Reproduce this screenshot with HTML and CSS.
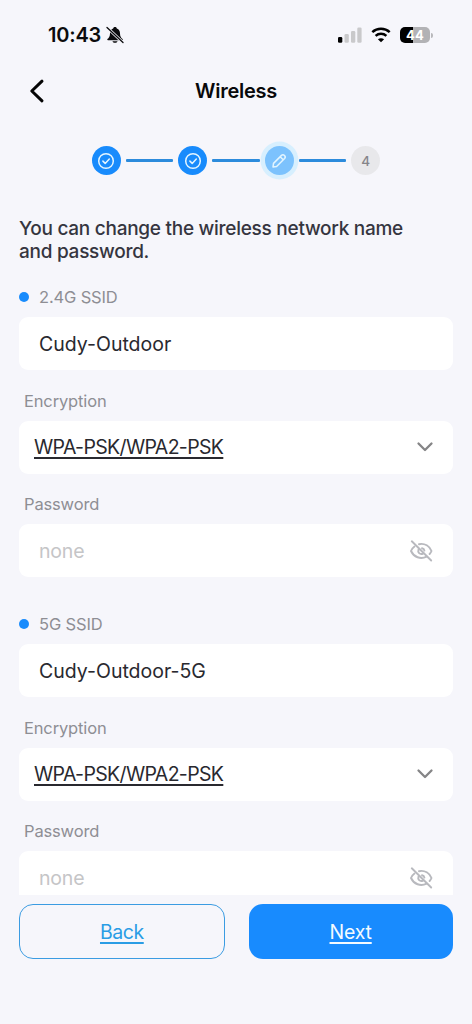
FILE: index.html
```html
<!DOCTYPE html>
<html lang="en">
<head>
<meta charset="utf-8">
<title>Wireless</title>
<link rel="stylesheet" href="styles.css">
</head>
<body>
<svg class="defs" width="0" height="0" aria-hidden="true">
  <symbol id="check" viewBox="0 0 18 18"><circle cx="9" cy="9" r="7.3"/><path d="M5.9 9.1 8.2 11.4 12.3 7"/></symbol>
  <symbol id="chevron" viewBox="0 0 18 12"><path d="M2.500 2.500 9 9 15.500 2.500"/></symbol>
  <symbol id="eye-off" viewBox="0 0 24 24">
    <path d="M10 5.200C16 4 20.500 7.300 22.500 12 22 13.200 21.400 14.100 20.600 15M17.600 17.600C11.500 20.800 4.800 18 2 12 2.800 10 4 8.600 5.500 7.500"/>
    <path d="M9.500 10.500C8.400 13.600 10.800 15.800 13.800 14.800M13 9.200C14.300 9.500 15.200 10.300 15.400 11.600M2.800 2.300 22.200 21.500"/>
  </symbol>
</svg>
<div class="screen">
  <div class="status">
    <span class="time">10:43</span>
    <svg class="bell" viewBox="0 0 18 18"><path d="M9 1C8 1 7.300 1.500 7.200 2.500 4.900 3.300 4 5.200 4 7.500 4 10.800 2.800 11.800 1.400 13.100 1 13.900 1.300 14.300 2 14.300H16C16.700 14.300 17 13.900 16.600 13.100 15.200 11.800 14 10.800 14 7.500 14 5.200 13.100 3.300 10.800 2.500 10.700 1.500 10 1 9 1ZM6.500 15.200C7 17.300 11 17.300 11.500 15.200Z"/><path class="bell-gap" d="M1 1.500 17 16.500"/><path class="bell-slash" d="M1 1.500 17 16.500"/></svg>
    <div class="indicators">
      <svg class="signal" viewBox="0 0 24 16"><rect x="0" y="10" width="4.300" height="5.800" rx="1.300" fill="#000"/><g fill="#c9c9cb"><rect x="6.500" y="7" width="4.300" height="8.800" rx="1.300"/><rect x="13" y="4" width="4.300" height="11.800" rx="1.300"/><rect x="19.300" y="0.500" width="4.300" height="15.300" rx="1.300"/></g></svg>
      <svg class="wifi" viewBox="0 0 20 16"><path d="M1.300 5.200C6.200.7 13.800.7 18.700 5.200M4.600 8.900C7.700 6.100 12.300 6.100 15.400 8.900"/><path class="dot" d="M10 15.200 6.900 12.200C8.700 10.800 11.300 10.800 13.100 12.200Z"/></svg>
      <div class="battery"><span>44</span></div><i class="battery-cap"></i>
    </div>
  </div>

  <header class="header">
    <svg class="back-icon" viewBox="0 0 16 24"><path d="M13 2.200 2.800 12 13 21.800"/></svg>
    <h1>Wireless</h1>
  </header>

  <div class="steps">
    <div class="step done"><svg><use href="#check"/></svg></div>
    <div class="line"></div>
    <div class="step done"><svg><use href="#check"/></svg></div>
    <div class="line"></div>
    <div class="step current"><svg viewBox="0 0 18 18"><path d="M3 15 3.500 11.400 11.500 3.400Q13 2 14.500 3.500 16 5 14.600 6.500L6.600 14.500ZM10.200 4.800 13.200 7.800"/></svg></div>
    <div class="line"></div>
    <div class="step todo">4</div>
  </div>

  <main class="content">
    <p class="intro">You can change the wireless network name<br><span>and password.</span></p>
    <section class="network">
      <div class="label band"><i></i><span>2.4G SSID</span></div>
      <div class="field"><span>Cudy-Outdoor</span></div>
      <div class="label"><span>Encryption</span></div>
      <div class="field select"><u>WPA-PSK/WPA2-PSK</u><svg class="chevron"><use href="#chevron"/></svg></div>
      <div class="label"><span>Password</span></div>
      <div class="field"><span class="placeholder">none</span><svg class="eye"><use href="#eye-off"/></svg></div>
    </section>
    <section class="network">
      <div class="label band"><i></i><span>5G SSID</span></div>
      <div class="field"><span>Cudy-Outdoor-5G</span></div>
      <div class="label"><span>Encryption</span></div>
      <div class="field select"><u>WPA-PSK/WPA2-PSK</u><svg class="chevron"><use href="#chevron"/></svg></div>
      <div class="label"><span>Password</span></div>
      <div class="field"><span class="placeholder">none</span><svg class="eye"><use href="#eye-off"/></svg></div>
    </section>
  </main>

  <footer class="actions">
    <div class="button secondary"><u>Back</u></div>
    <div class="button primary"><u>Next</u></div>
  </footer>
</div>
</body>
</html>
```

FILE: styles.css
```css
* { box-sizing: border-box; }
body { margin: 0; background: #f6f6fb; font-family: Inter, "Liberation Sans", sans-serif; }
svg { display: block; fill: none; flex: none; }
.defs { position: absolute; }
.screen { width: 472px; height: 1024px; display: flex; flex-direction: column; overflow: hidden; }

.status { height: 70px; flex: none; display: flex; align-items: center; padding: 0 39px 0 48px; color: #0b0b0d; }
.time { font-size: 20px; font-weight: 600; letter-spacing: -0.2px; width: 58px; }
.bell { width: 18px; height: 18px; }
.bell path { fill: #0b0b0d; }
.bell .bell-gap { stroke: #f6f6fb; stroke-width: 3; }
.bell .bell-slash { stroke: #0b0b0d; stroke-width: 1.3; stroke-linecap: round; }
.indicators { display: flex; align-items: center; margin-left: auto; }
.signal { width: 24px; height: 16px; }
.wifi { width: 20px; height: 16px; margin: 0 9px; stroke: #000; stroke-width: 2.5; }
.wifi .dot { fill: #000; stroke: none; }
.battery { width: 30px; height: 16px; border-radius: 5px; background: linear-gradient(90deg, #000 44%, #b2b2b5 44%); color: #fff; font-size: 13px; font-weight: 700; line-height: 16px; letter-spacing: 0.3px; text-align: center; }
.battery-cap { width: 2px; height: 5px; margin-left: 1px; border-radius: 0 2px 2px 0; background: #b8b8bb; }

.header { height: 42px; flex: none; display: grid; grid-template-columns: 50px 1fr 50px; align-items: center; }
.back-icon { width: 16px; height: 24px; margin-left: 29px; stroke: #050505; stroke-width: 3; stroke-linecap: round; stroke-linejoin: round; }
h1 { margin: 0; text-align: center; font-size: 20px; font-weight: 600; letter-spacing: -0.25px; color: #08080a; }

.steps { height: 97px; flex: none; display: flex; align-items: center; justify-content: center; gap: 5px; }
.step { width: 29px; height: 29px; border-radius: 50%; display: grid; place-items: center; }
.step svg { width: 18px; height: 18px; stroke: #e3f5ff; stroke-width: 1.5; stroke-linecap: round; stroke-linejoin: round; }
.done { background: #188bfc; }
.current { background: #7cc2fd; box-shadow: 0 0 0 4.5px #d7effe; }
.todo { background: #e8e8eb; color: #85858a; font-size: 13.500px; font-weight: 500; }
.line { width: 47.500px; height: 2.500px; border-radius: 1px; background: #2c8bdc; }

.content { height: 686px; flex: none; overflow: hidden; padding: 8px 19px 0; }
.intro { margin: 0; height: 46px; font-size: 19px; line-height: 23px; font-weight: 500; letter-spacing: -0.27px; color: #35353f; white-space: nowrap; }
.network { height: 327px; }
.label { height: 50.300px; padding: 10.500px 5px 0; display: flex; align-items: center; font-size: 16.500px; line-height: 20px; letter-spacing: -0.15px; color: #8e8e94; }
.band { height: 54.300px; padding: 13px 0 0; gap: 10px; }
.band i { width: 10px; height: 10px; border-radius: 50%; background: #188bfc; }
.field { height: 53px; border-radius: 9px; background: #fff; display: flex; align-items: center; justify-content: space-between; padding: 1px 20px 0; font-size: 19.500px; color: #29292f; }
.select { padding: 0 19px 0 15px; }
.select u { letter-spacing: -0.650px; }
.field u, .button u { text-decoration-thickness: 1.500px; text-underline-offset: 3px; }
.placeholder { color: #c5c5c7; letter-spacing: -0.2px; }
.chevron { width: 18px; height: 12px; stroke: #858587; stroke-width: 2.300; stroke-linecap: round; stroke-linejoin: round; }
.eye { width: 24px; height: 24px; stroke: #b8b9be; stroke-width: 1.900; stroke-linecap: round; }

.actions { padding: 9px 19.500px 0 19px; display: flex; gap: 24px; }
.button { flex: 1; height: 55px; border-radius: 14px; display: flex; align-items: center; justify-content: center; font-size: 19.500px; }
.secondary { border: 1.500px solid #3b9ce2; color: #2a9de5; }
.secondary u { letter-spacing: -0.450px; }
.primary { background: #188bfe; color: #f3faff; }
.primary u { letter-spacing: -0.200px; }
```
